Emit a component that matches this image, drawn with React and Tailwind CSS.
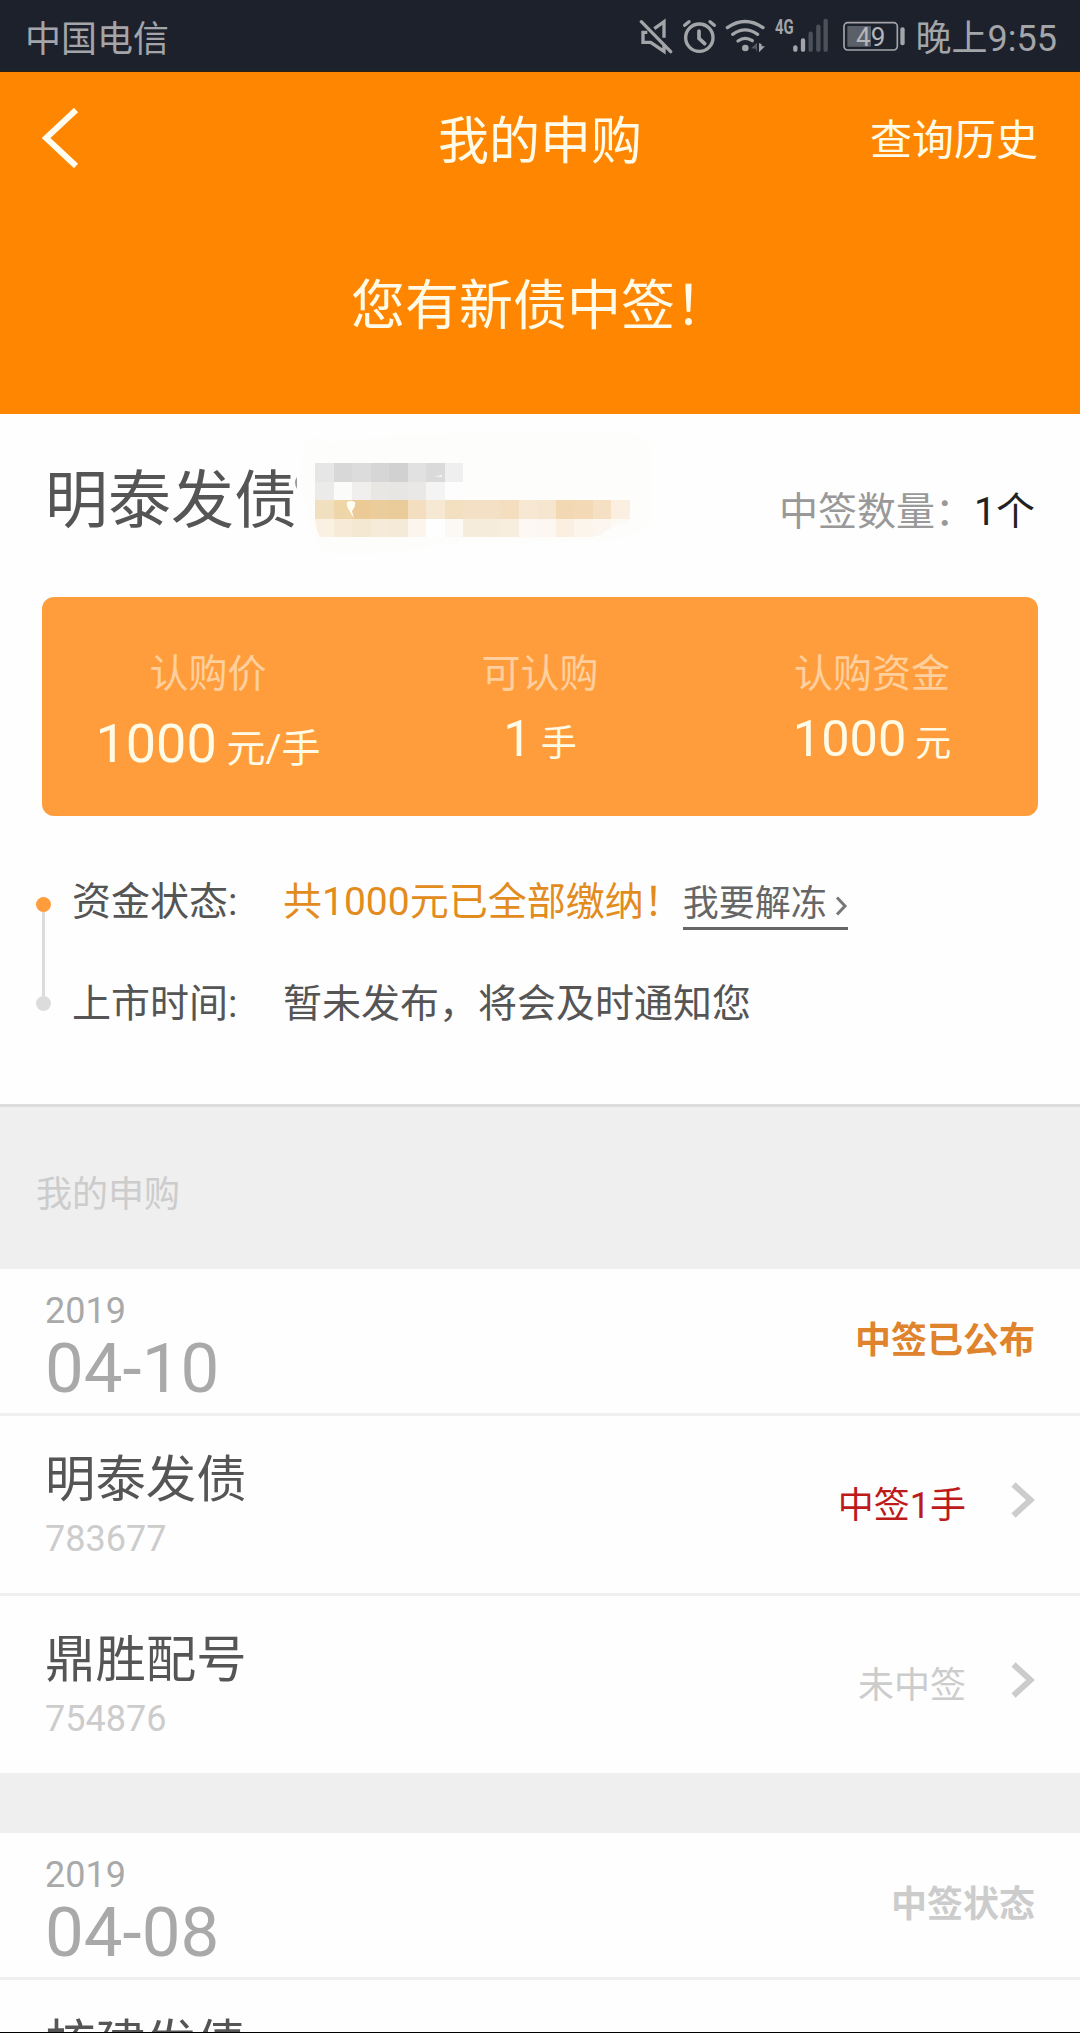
import React from 'react';

// --- DATA ---
const summary = [
  { label: '认购价', value: '1000', unit: '元/手', big: true },
  { label: '可认购', value: '1', unit: '手' },
  { label: '认购资金', value: '1000', unit: '元' },
];

const groups = [
  {
    year: '2019',
    date: '04-10',
    status: '中签已公布',
    active: true,
    items: [
      { name: '明泰发债', code: '783677', result: '中签1手', won: true },
      { name: '鼎胜配号', code: '754876', result: '未中签' },
    ],
  },
  {
    year: '2019',
    date: '04-08',
    status: '中签状态',
    items: [{ name: '核建发债', code: '', result: '' }],
  },
];

// Censored area next to the bond name, one colour per block
const mosaic = [
  ['#e6e6e6', '#d8d8d8', '#dcdcdc', '#d6d6d6', '#d1d1d1', '#e1e1e1', '#dadada', '#efefef'],
  ['#ebebea', '#fbfbf9', '#f0efee', '#e8e7e4', '#e7e6e5', '#e9e8e7', '#f4f4f4', '#fdfdfd'],
  ['#f1e0c0', '#eed6a8', '#ebca96', '#ebcd9b', '#e9cc9a', '#f4dec0', '#f6e8d3', '#f3e0c1', '#f4e1c5', '#f4e1c5', '#f5debf', '#f7e8d4', '#f6e6cf', '#f3d8b4', '#f4d9b7', '#f6e0c3', '#fbefe1'],
  ['#faf1e3', '#f7ead6', '#f5e8d3', '#f6ebd9', '#f5ead8', '#fcf5ed', '#fefefe', '#fcf8f4', '#f6ecdb', '#f6ecdb', '#f8eee0', '#fdf8f3', '#fcf7f1', '#faefe1', '#fbf5ec', '#fbf6ef', '#fdf9f5'],
];

// --- STATUS BAR ---
const StatusBar = () => (
  <div className="h-[72px] bg-[#1d212c] text-[#a3a5a9] flex items-center justify-between pl-[25px] pr-[23px] text-[36px] leading-[70px] border-b border-[#32200f]">
    <span className="pt-[8px]">中国电信</span>
    <div className="flex items-center">
      {/* mute */}
      <svg className="w-[35px] h-[72px] mr-[9px]" viewBox="54 0 105 216" fill="none" stroke="#a3a5a9" strokeWidth="10">
        <path d="M64 65 L152 155" strokeLinecap="round" />
        <path d="M82 97 H69 V127 H92 L132 154 V134" />
        <path d="M103 86 L132 65 V113" />
      </svg>
      {/* alarm */}
      <svg className="w-[35px] h-[72px] mr-[8px]" viewBox="186 0 105 216" fill="none" stroke="#a3a5a9" strokeWidth="10" strokeLinecap="round">
        <circle cx="238" cy="113" r="41" />
        <path d="M194 76 L207 65 M270 65 L283 76" />
        <path d="M237 93 V115 L254 131" strokeWidth="11" />
      </svg>
      {/* wifi */}
      <svg className="w-[40px] h-[72px] mr-[9px]" viewBox="315 0 120 216" fill="none" stroke="#a3a5a9" strokeWidth="10" strokeLinecap="round">
        <path d="M322 83 Q375 46 429 83" />
        <path d="M338 103 Q375 76 413 103" />
        <path d="M354 123 Q375 108 397 122" />
        <circle cx="376" cy="144" r="10" fill="#a3a5a9" stroke="none" />
        <path d="M393 145 L411 128 V156 L407 146 Z" fill="#555962" stroke="none" />
        <path d="M417 129 V157 L435 139 H425 V133 Z" fill="#a3a5a9" stroke="none" />
      </svg>
      {/* 4G signal */}
      <svg className="w-[55px] h-[72px] mr-[14px]" viewBox="462 0 165 216">
        <text x="465" y="101" fontSize="58" fontWeight="700" fill="#a3a5a9" textLength="56" lengthAdjust="spacingAndGlyphs">4G</text>
        <g strokeWidth="13" strokeLinecap="round" stroke="#a3a5a9">
          <path d="M526 142 V149 M549 121 V149" />
          <path d="M572 101 V149 M595 80 V149 M617 63 V149" stroke="#4c5059" />
        </g>
      </svg>
      {/* battery */}
      <svg className="w-[62px] h-[72px] mr-[11px]" viewBox="669 0 186 216">
        <rect x="672" y="68" width="160" height="82" rx="11" fill="none" stroke="#a3a5a9" strokeWidth="5" />
        <rect x="682" y="78" width="71" height="62" rx="3" fill="#5b5f68" />
        <rect x="841" y="82" width="13" height="54" rx="6" fill="#a3a5a9" />
        <text x="752" y="137" fontSize="78" textAnchor="middle" fill="#b4b6b9">49</text>
      </svg>
      <span className="pt-[6px]">晚上9:55</span>
    </div>
  </div>
);

// --- HEADER ---
const Header = () => (
  <div className="h-[342px] bg-[#ff8600] text-[#fffbe8]">
    <div className="h-[138px] grid grid-cols-[1fr_auto_1fr] items-center pl-[42px] pr-[42px]">
      <svg className="w-[38px] h-[60px] -mt-[6px]" viewBox="0 0 38 60" fill="none" stroke="#fffdf2" strokeWidth="6">
        <path d="M34 2 L4 30 L34 58" />
      </svg>
      <h1 className="text-[51px] leading-[136px] pt-[2px]">我的申购</h1>
      <span className="text-[42px] text-right leading-[136px]">查询历史</span>
    </div>
    <p className="text-center text-[54px] leading-[60px] pt-[67px]">您有新债中签！</p>
  </div>
);

const Mosaic = () => (
  <svg className="w-[366px] h-[150px] -ml-[3px]" viewBox="294 420 366 150">
    <path d="M303 441 Q316 434 330 443 Q390 433 500 433 H630 Q650 436 650 452 V520 Q640 538 600 541 L440 545 Q350 562 322 550 L312 536 L300 480 Z" fill="#fdfdfc" />
    <path d="M297 477 Q293 482 297 489 Z" fill="#9a9a9a" />
    <clipPath id="smear">
      <path d="M315 463 H640 V520 Q612 525 605 532 Q600 537 590 537 H320 Q316 530 315 520 Z" />
    </clipPath>
    <g clipPath="url(#smear)" shapeRendering="crispEdges">
      {mosaic.map((row, y) =>
        row.map((color, x) => (
          <rect key={`${x}-${y}`} x={315 + x * 18.53} y={463 + y * 18.5} width="18.6" height="18.6" fill={color} />
        ))
      )}
    </g>
    <path d="M347 502 Q352 500 355 502 Q356 506 352 511 L354 519 L349 510 Q346 506 347 502 Z" fill="#fffef5" />
    <path d="M434 476.500 L442 475 V477 Z" fill="#f5f5f5" />
  </svg>
);

// --- WINNING DETAIL ---
const Detail = () => (
  <section className="h-[693px] bg-[#fefefe] border-b-[3px] border-[#dcdcdc] text-[#555]">
    <div className="h-[183px] flex pl-[45px] pr-[45px]">
      <h2 className="text-[63px] leading-[63px] pt-[55px]">明泰发债</h2>
      <div className="pt-[6px]">
        <Mosaic />
      </div>
      <p className="ml-auto text-[39px] leading-[39px] pt-[79px] text-[#999] whitespace-nowrap">
        中签数量：<span className="text-[#222]">1个</span>
      </p>
    </div>

    <div className="mx-[42px] h-[219px] rounded-[12px] bg-[#ff9d3c] grid grid-cols-3 text-center">
      {summary.map((s) => (
        <div key={s.label} className="pt-[58px]">
          <div className="text-[39px] leading-[39px] text-[#ffcf9d]">{s.label}</div>
          {s.big ? (
            <div className="text-[54px] leading-[54px] pt-[23px] text-[#fffbe6]">
              {s.value}<span className="text-[39px] leading-none"> {s.unit}</span>
            </div>
          ) : (
            <div className="text-[50.5px] leading-[51px] pt-[19px] text-[#fffbe6]">
              {s.value}<span className="text-[36px] leading-none"> {s.unit}</span>
            </div>
          )}
        </div>
      ))}
    </div>

    <div className="flex pl-[35px] pt-[67px]">
      {/* timeline */}
      <div className="w-[16px] flex flex-col items-center pt-[14px]">
        <span className="w-[15px] h-[15px] rounded-full bg-[#ff9d3c]"></span>
        <span className="w-[3px] h-[84px] bg-[#dcdcdc]"></span>
        <span className="w-[15px] h-[15px] rounded-full bg-[#dcdcdc]"></span>
      </div>
      <div className="pl-[21px] text-[39px] leading-[39px]">
        <div className="flex h-[102px]">
          <span className="w-[211px]">资金状态:</span>
          <span className="text-[#e38c1e]">共1000元已全部缴纳！</span>
          <a className="w-[165px] h-[47px] border-b-[3px] border-[#666] text-[36px] leading-[42px] text-[#666] flex justify-between">
            我要解冻
            <svg className="w-[13px] h-[20px] mt-[13px]" viewBox="0 0 13 20" fill="none" stroke="#777" strokeWidth="3">
              <path d="M2 1.500 L10 10 L2 18.500" />
            </svg>
          </a>
        </div>
        <div className="flex">
          <span className="w-[211px]">上市时间:</span>
          <span>暂未发布，将会及时通知您</span>
        </div>
      </div>
    </div>
  </section>
);

// --- SUBSCRIPTION LIST ---
const Item = ({ item }) => (
  <div className="h-[180px] border-t-[3px] border-[#efefef] flex justify-between pl-[45px] pr-[45px]">
    <div>
      <div className="text-[50.4px] leading-[51px] pt-[38px] text-[#555]">{item.name}</div>
      <div className="text-[36px] leading-[36px] pt-[16px] text-[#ccc]">{item.code}</div>
    </div>
    <div className="flex items-start">
      <span className={`text-[36px] leading-[36px] pt-[72px] ${item.won ? 'text-[#bd1a1a]' : 'text-[#ccc]'}`}>{item.result}</span>
      <svg className="w-[24px] h-[36px] ml-[45px] mt-[66px]" viewBox="0 0 24 36" fill="none" stroke="#ccc" strokeWidth="6">
        <path d="M2.500 2.500 L19.500 18 L2.500 33.500" />
      </svg>
    </div>
  </div>
);

const Group = ({ group }) => (
  <div className="bg-[#fefefe] mb-[60px]">
    <div className="h-[144px] flex justify-between pl-[45px] pr-[45px]">
      <div className="text-[#a9a9a9]">
        <div className="text-[36px] leading-[36px] pt-[24px]">{group.year}</div>
        <div className="text-[69px] leading-[69px] pt-[5px]">{group.date}</div>
      </div>
      <span className={`text-[36px] leading-[36px] pt-[54px] font-bold ${group.active ? 'text-[#df832c]' : 'text-[#ccc]'}`}>{group.status}</span>
    </div>
    {group.items.map((item) => (
      <Item key={item.name} item={item} />
    ))}
  </div>
);

const App = () => {
  return (
    <div className="w-[1080px] h-[2033px] overflow-hidden bg-[#efefef] border-b border-black font-['Roboto','Noto_Sans_CJK_SC',sans-serif]">
      <StatusBar />
      <Header />
      <Detail />
      <div className="h-[162px] pl-[36px] pt-[70px] text-[36px] leading-[36px] text-[#ccc]">我的申购</div>
      {groups.map((group) => (
        <Group key={group.date} group={group} />
      ))}
    </div>
  );
};

export default App;
